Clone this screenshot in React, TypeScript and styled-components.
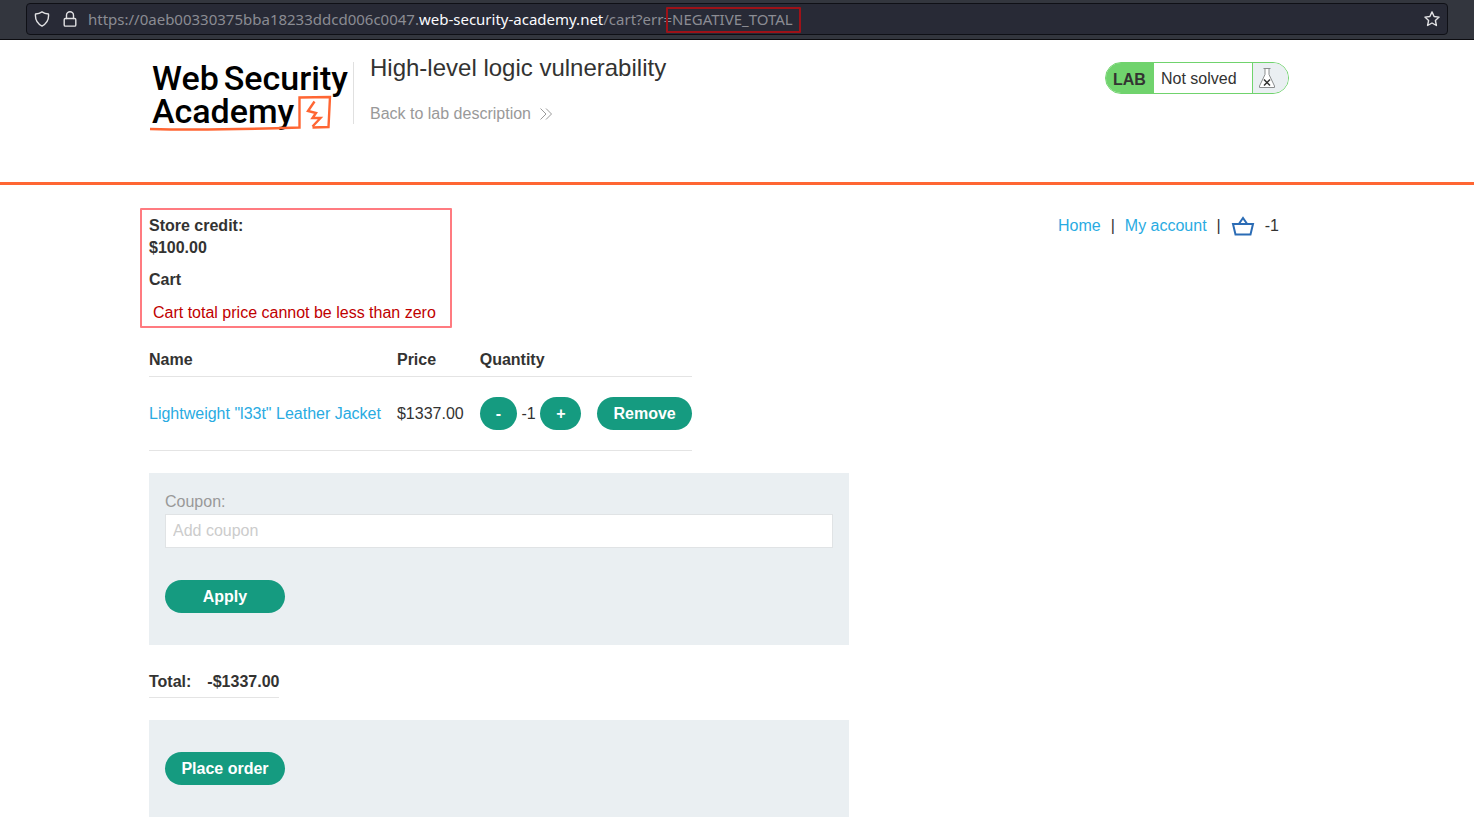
import React from "react";
import styled, { createGlobalStyle } from "styled-components";

const GlobalStyle = createGlobalStyle`
  *, *::before, *::after { box-sizing: border-box; }
  body {
    margin: 0;
    background: #fff;
    color: #333332;
    font: 16px/22px "Liberation Sans", Arial, sans-serif;
  }
`;

const BrowserBar = styled.div`
  height: 40px;
  padding: 3px 26px 0;
  background: #33363e;
  border-bottom: 1px solid #0c0c10;
`;

const AddressField = styled.div`
  display: flex;
  align-items: center;
  height: 32px;
  padding: 0 7px;
  background: #282a36;
  border: 1px solid #0f1016;
  border-radius: 4px;
`;

const BarIcon = styled.svg`
  width: 16px;
  height: 16px;
  flex: none;
  margin-right: 12px;
  fill: none;
  stroke: #e2e2e4;
  stroke-width: 1.4;
  stroke-linejoin: round;
  stroke-linecap: round;

  & + & {
    margin-right: 10px;
  }
`;

const Url = styled.div`
  flex: 1;
  color: #8b8c93;
  font: 15px/20px "Noto Sans", sans-serif;
  white-space: nowrap;
`;

const Domain = styled.span`
  color: #fbfbfe;
`;

const MarkedParam = styled.span`
  position: relative;

  &::after {
    content: "";
    position: absolute;
    inset: -2px -8px -4px -6px;
    border: 2px solid #9d1218;
    border-radius: 1px;
  }
`;

const StarButton = styled.button`
  display: flex;
  padding: 0;
  border: 0;
  background: none;

  svg {
    margin: 0;
  }
`;

const Container = styled.div`
  max-width: 1200px;
  margin: 0 auto;
  padding: 0 48px 0 12px;
`;

const LabHeader = styled.header`
  border-bottom: 3px solid #ff6633;
`;

const HeaderRow = styled(Container)`
  display: flex;
  align-items: flex-start;
  height: 142px;
  padding-top: 14px;
`;

const Logo = styled.a`
  position: relative;
  width: 205px;
  height: 62px;
  margin-top: 8px;
  padding-left: 3px;
  border-right: 1px solid #e0e0e0;
  color: #000;
  font: 500 34px/33px Roboto, sans-serif;
  text-decoration: none;
  white-space: nowrap;
`;

const LogoLine = styled.span`
  display: flex;
  gap: 5px;
`;

const LogoMark = styled.svg`
  position: absolute;
  left: 0;
  top: 32px;
  width: 190px;
  height: 40px;
  fill: none;
  stroke: #ff6633;
`;

const TitleBlock = styled.div`
  flex: 1;
  padding-left: 16px;
`;

const Title = styled.h1`
  margin: 0 0 21px;
  font-size: 24px;
  line-height: 28px;
  font-weight: 400;
`;

const BackLink = styled.a`
  display: inline-flex;
  align-items: center;
  gap: 9px;
  color: #999;
  text-decoration: none;
`;

const LabStatus = styled.div`
  display: flex;
  height: 32px;
  margin-top: 8px;
  border: 1px solid #70d36d;
  border-radius: 16px;
  overflow: hidden;
`;

const LabTag = styled.strong`
  width: 48px;
  padding-left: 7px;
  background: #70d36d;
  line-height: 34px;
`;

const LabState = styled.span`
  width: 99px;
  padding-left: 7px;
  line-height: 32px;
  border-right: 1px solid #70d36d;
`;

const FlaskCell = styled.span`
  display: flex;
  align-items: center;
  width: 35px;
  padding-left: 5px;
  background: #eaeff2;
`;

const TopRow = styled.div`
  display: flex;
  justify-content: space-between;
  align-items: flex-start;
  padding-top: 30px;
`;

const Summary = styled.section`
  position: relative;

  &::after {
    content: "";
    position: absolute;
    inset: -7px -16px -4px -9px;
    border: 2px solid #ff7b80;
    border-radius: 1px;
    pointer-events: none;
  }
`;

const Credit = styled.p`
  margin: 0 0 10px;
  font-weight: 700;
`;

const CartHeading = styled.h2`
  margin: 0 0 11px;
  font-size: 16px;
  line-height: 22px;
`;

const ErrorText = styled.p`
  margin: 0;
  padding-left: 4px;
  color: #c00000;
`;

const Nav = styled.nav`
  display: flex;
  align-items: center;
  gap: 10px;
  padding-right: 10px;
`;

const Link = styled.a`
  color: #29abe2;
  text-decoration: none;
`;

const BasketLink = styled.a`
  display: flex;
`;

const CartTable = styled.table`
  margin-top: 25px;
  border-collapse: separate;
  border-spacing: 0;
  white-space: nowrap;

  th, td {
    padding: 0 16px 0 0;
    border-bottom: 1px solid #e4e4e4;
    text-align: left;
  }
  th { padding-bottom: 5px; }
  td { height: 74px; }
  th:last-child, td:last-child { padding-right: 0; }
`;

const Button = styled.button<{ $wide?: boolean }>`
  height: 33px;
  min-width: ${(p) => (p.$wide ? "120px" : "0")};
  padding: 0 16px;
  border: 0;
  border-radius: 17px;
  background: #159b80;
  color: #fff;
  font: 700 16px/22px "Liberation Sans", Arial, sans-serif;
`;

const Panel = styled.form<{ $top: number }>`
  display: flex;
  flex-direction: column;
  align-items: flex-start;
  max-width: 700px;
  margin-top: 22px;
  padding: ${(p) => p.$top}px 16px 32px;
  background: #eaeff2;
`;

const CouponLabel = styled.label`
  color: #999;
`;

const CouponInput = styled.input`
  width: 100%;
  height: 34px;
  margin: 1px 0 32px;
  padding: 0 7px;
  border: 1px solid #e0e3e5;
  background: #fff;
  color: #333332;
  font: inherit;

  &::placeholder {
    color: #ccc;
    opacity: 1;
  }
`;

const TotalTable = styled.table`
  margin-top: 26px;
  border-collapse: separate;
  border-spacing: 0;

  th, td {
    padding: 0 0 4px;
    border-bottom: 1px solid #e4e4e4;
    font-weight: 700;
    text-align: left;
  }
  th { padding-right: 16px; }
`;

const preventSubmit = (event: React.FormEvent) => event.preventDefault();

export default function App() {
  return (
    <>
      <GlobalStyle />
      <BrowserBar>
        <AddressField>
          <BarIcon viewBox="0 0 16 16">
            <path d="M8 .9c1.900 1.400 4.200 2 6.500 2.100.5 5.300-1.800 9.700-6.500 12.100C3.300 12.700 1 8.300 1.500 3 3.800 2.900 6.100 2.300 8 .9z" />
          </BarIcon>
          <BarIcon viewBox="0 0 16 16">
            <rect x="2.200" y="7.500" width="11.600" height="7.600" rx="1.200" />
            <path d="M4.500 7.500V4.300a3.500 3.500 0 0 1 7 0v3.200" />
          </BarIcon>
          <Url>
            https://0aeb00330375bba18233ddcd006c0047.<Domain>web-security-academy.net</Domain>
            /cart?err=<MarkedParam>NEGATIVE_TOTAL</MarkedParam>
          </Url>
          <StarButton type="button" aria-label="Bookmark this page">
            <BarIcon viewBox="0 0 16 16">
              <path d="M8 .9l2.100 4.600 5 .6-3.700 3.400 1 5L8 12l-4.400 2.500 1-5L.9 6.100l5-.6z" />
            </BarIcon>
          </StarButton>
        </AddressField>
      </BrowserBar>

      <LabHeader>
        <HeaderRow>
          <Logo href="#">
            <LogoLine>
              <span>Web</span> <span>Security</span>
            </LogoLine>
            <LogoLine>Academy</LogoLine>
            <LogoMark viewBox="0 0 190 40">
              <path d="M1 35Q60 36.500 150.500 33.500V3.500l30.500-.5-1.500 30-16 .5" strokeWidth="2.400" />
              <path d="M165.500 7.500l-6.500 9.500 8 2-3.500 5h8l-8 8.500" strokeWidth="2.400" />
            </LogoMark>
          </Logo>
          <TitleBlock>
            <Title>High-level logic vulnerability</Title>
            <BackLink href="#">
              Back to lab description
              <svg width="12" height="12" viewBox="0 0 12 12" fill="none" stroke="#999">
                <path d="M.5.500L6 6 .5 11.500M6 .5L11.500 6 6 11.500" />
              </svg>
            </BackLink>
          </TitleBlock>
          <LabStatus>
            <LabTag>LAB</LabTag>
            <LabState>Not solved</LabState>
            <FlaskCell>
              <svg width="18" height="22" viewBox="0 0 18 22" fill="none">
                <path d="M5.500 1.500h7M7 1.500v6L1.500 19v1.500h15V19L11 7.500v-6" fill="#fff" stroke="#8b8d8e" />
                <path d="M6 12.500l6 6M12 12.500l-6 6" stroke="#333332" strokeWidth="1.500" />
              </svg>
            </FlaskCell>
          </LabStatus>
        </HeaderRow>
      </LabHeader>

      <Container as="main">
        <TopRow>
          <Summary>
            <Credit>
              Store credit:
              <br />
              $100.00
            </Credit>
            <CartHeading>Cart</CartHeading>
            <ErrorText>Cart total price cannot be less than zero</ErrorText>
          </Summary>
          <Nav>
            <Link href="#">Home</Link>
            <span>|</span>
            <Link href="#">My account</Link>
            <span>|</span>
            <BasketLink href="#" aria-label="Cart">
              <svg width="24" height="20" viewBox="0 0 24 20" fill="none" stroke="#2b6cb5" strokeWidth="2">
                <path d="M2 8h20l-2.500 10.500h-15zM7.800 8L12 2l4.200 6" />
              </svg>
            </BasketLink>
            <span>-1</span>
          </Nav>
        </TopRow>

        <CartTable>
          <thead>
            <tr>
              <th>Name</th>
              <th>Price</th>
              <th>Quantity</th>
              <th />
            </tr>
          </thead>
          <tbody>
            <tr>
              <td>
                <Link href="#">Lightweight "l33t" Leather Jacket</Link>
              </td>
              <td>$1337.00</td>
              <td>
                <Button type="button">-</Button> -1 <Button type="button">+</Button>
              </td>
              <td>
                <Button type="button">Remove</Button>
              </td>
            </tr>
          </tbody>
        </CartTable>

        <Panel $top={18} onSubmit={preventSubmit}>
          <CouponLabel htmlFor="coupon">Coupon:</CouponLabel>
          <CouponInput id="coupon" type="text" placeholder="Add coupon" />
          <Button $wide type="submit">Apply</Button>
        </Panel>

        <TotalTable>
          <tbody>
            <tr>
              <th scope="row">Total:</th>
              <td>-$1337.00</td>
            </tr>
          </tbody>
        </TotalTable>

        <Panel $top={32} onSubmit={preventSubmit}>
          <Button $wide type="submit">Place order</Button>
        </Panel>
      </Container>
    </>
  );
}
